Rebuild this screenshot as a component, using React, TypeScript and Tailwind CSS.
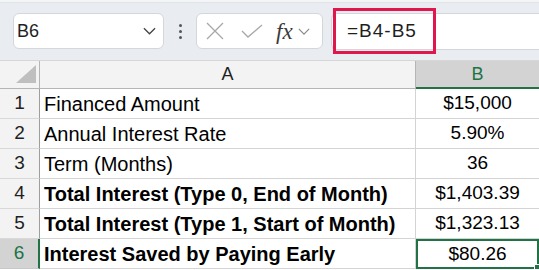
import React from 'react';

const rows = [
  { n: 1, a: 'Financed Amount', b: '$15,000', bold: false },
  { n: 2, a: 'Annual Interest Rate', b: '5.90%', bold: false },
  { n: 3, a: 'Term (Months)', b: '36', bold: false },
  { n: 4, a: 'Total Interest (Type 0, End of Month)', b: '$1,403.39', bold: true },
  { n: 5, a: 'Total Interest (Type 1, Start of Month)', b: '$1,323.13', bold: true },
  { n: 6, a: 'Interest Saved by Paying Early', b: '$80.26', bold: true },
];

const Chevron: React.FC<{ className?: string }> = ({ className }) => (
  <svg viewBox="0 0 14 8" className={className} fill="none" stroke="currentColor" strokeWidth="1.4">
    <path d="M1 1l6 6 6-6" />
  </svg>
);

const Toolbar: React.FC = () => (
  <div className="relative flex h-[61px] items-start border-b border-[#d6d6d6] bg-[#e9ecf0] pl-[13px] pt-[13px]">
    <div className="absolute left-0 right-0 top-0 h-[3px] bg-[#f4f5f7] border-b border-[#e0e3e7]" />
    <div className="flex h-[36px] w-[151px] items-center justify-between rounded-[6px] border border-[#d3d6da] bg-white pl-[3px] pr-[7px]">
      <span className="text-[18px] text-[#1f1f1f]">B6</span>
      <Chevron className="h-[8px] w-[13px] text-[#444]" />
    </div>
    <div className="flex h-[36px] w-[32px] flex-col items-center justify-center gap-[3px]">
      <span className="h-[3px] w-[3px] rounded-full bg-[#555]" />
      <span className="h-[3px] w-[3px] rounded-full bg-[#555]" />
      <span className="h-[3px] w-[3px] rounded-full bg-[#555]" />
    </div>
    <div className="flex h-[36px] w-[127px] items-center rounded-[6px] border border-[#d3d6da] bg-white pl-[9px]">
      <svg viewBox="0 0 18 18" className="h-[18px] w-[18px] text-[#a8a8a8]" fill="none" stroke="currentColor" strokeWidth="1.3">
        <path d="M1 1l16 16M17 1L1 17" />
      </svg>
      <svg viewBox="0 0 22 14" className="ml-[17px] h-[14px] w-[22px] text-[#a8a8a8]" fill="none" stroke="currentColor" strokeWidth="1.3">
        <path d="M1 7l6 6L21 1" />
      </svg>
      <span className="ml-[13px] text-[23px] italic leading-none text-[#3a3a3a]" style={{ fontFamily: '"Liberation Serif", serif' }}>
        fx
      </span>
      <Chevron className="ml-[5px] h-[7px] w-[12px] text-[#8a8a8a]" />
    </div>
    <div className="relative ml-[8px] flex h-[37px] flex-1 items-center rounded-l-[6px] border border-r-0 border-[#d3d6da] bg-white pl-[15px]">
      <span className="text-[19px] tracking-[1px] text-[#1f1f1f]">=B4-B5</span>
      <div className="absolute left-[1px] top-[-6px] h-[46px] w-[103px] border-[3px] border-[#e0174d]" />
    </div>
  </div>
);

export default function App() {
  return (
    <div className="h-[270px] w-[539px] overflow-hidden bg-white" style={{ fontFamily: '"Liberation Sans", Arial, sans-serif' }}>
      <Toolbar />
      <div className="grid grid-cols-[40px_376px_123px]">
        <div className="relative h-[28px] border-b border-r border-[#b5b5b5] bg-[#f3f3f3]">
          <svg viewBox="0 0 20 18" className="absolute left-[16px] top-[4px] h-[18px] w-[20px]">
            <path d="M20 0L20 18L0 18Z" fill="#bfbfbf" />
          </svg>
        </div>
        <div className="flex h-[28px] items-center justify-center border-b border-r border-[#b5b5b5] bg-[#f3f3f3] text-[18px] text-[#1f1f1f]">
          A
        </div>
        <div className="flex h-[28px] items-center justify-center border-b-2 border-[#217346] bg-[#d3d3d3] text-[18px] text-[#217346]">
          B
        </div>
        {rows.map(r => {
          const sel = r.n === 6;
          return (
            <React.Fragment key={r.n}>
              <div
                className={
                  sel
                    ? 'flex h-[30px] items-center justify-center border-b border-r-2 border-b-[#c8c8c8] border-r-[#217346] bg-[#d3d3d3] text-[19px] text-[#217346]'
                    : 'flex h-[30px] items-center justify-center border-b border-r border-b-[#d8d8d8] border-r-[#9e9e9e] bg-[#f3f3f3] text-[19px] text-[#1f1f1f]'
                }
              >
                {r.n}
              </div>
              <div
                className={
                  'flex h-[30px] items-center border-b border-r border-[#d4d4d4] pl-[4px] text-[20px] text-black ' +
                  (r.bold ? 'font-bold' : '')
                }
              >
                {r.a}
              </div>
              <div
                className={
                  sel
                    ? 'relative flex h-[30px] items-center justify-center border-2 border-[#217346] text-[19px] text-black'
                    : 'flex h-[30px] items-center justify-center border-b border-[#d4d4d4] text-[19px] text-black'
                }
              >
                {r.b}
                {sel && <span className="absolute bottom-[-3px] right-[-3px] h-[6px] w-[6px] border border-white bg-[#217346]" />}
              </div>
            </React.Fragment>
          );
        })}
      </div>
    </div>
  );
}
